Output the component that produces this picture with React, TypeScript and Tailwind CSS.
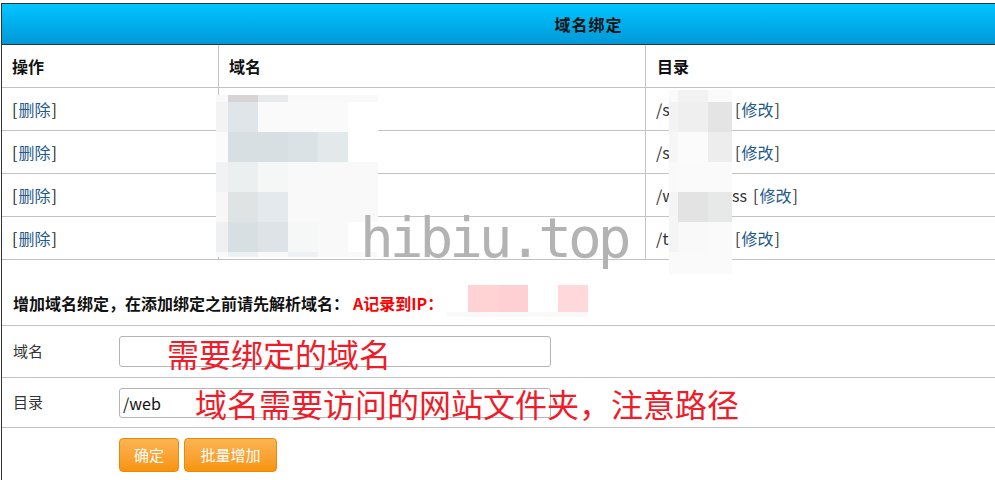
const cn = { fontFamily: '"Microsoft YaHei", "Noto Sans CJK SC", sans-serif' };

const rows = [
  { dir: "/s", tail: "" },
  { dir: "/s", tail: "" },
  { dir: "/w", tail: "ss" },
  { dir: "/t", tail: "" },
];

// pixelated mosaic over the domain column
const domainBlur = [
  ["bg-[#f9f9f9]", "bg-[#d6d4d3]", "bg-[#e6eaeb]", "bg-[#f9f9f9]", "bg-[#f9f9f9]", "bg-[#f9f9f9]"],
  ["bg-[#f3f3f3]", "bg-[#dfe5e8]", "bg-[#fafafa]", "bg-[#fafafa]", "bg-[#fafafa]", "bg-white"],
  ["bg-[#fbfbfb]", "bg-[#d7dfe2]", "bg-[#d7dfe2]", "bg-[#dae2e5]", "bg-[#e3e8ea]", "bg-white"],
  ["bg-[#f0f2f3]", "bg-[#ebeff0]", "bg-[#f5f7f7]", "bg-[#f9f9f9]", "bg-[#f9f9f9]", "bg-[#f9f9f9]"],
  ["bg-[#f7f7f7]", "bg-[#dfe3e3]", "bg-[#e3e9ec]", "bg-[#f9f9f9]", "bg-[#f9f9f9]", "bg-[#f9f9f9]"],
  ["bg-[#eef0f1]", "bg-[#d7dfe2]", "bg-[#dde3e6]", "bg-[#f6f8f8]", "bg-[#f9f9f9]", "bg-white"],
  ["bg-[#f9f9f9]", "bg-[#eef1f3]", "bg-[#f9f9f9]", "bg-[#eef1f3]", "bg-[#f9f9f9]", "bg-[#f9f9f9]"],
];

const dirBlur = [
  ["bg-[#fafafa]", "bg-[#f2f2f2]", "bg-[#fafafa]"],
  ["bg-[#f3f3f3]", "bg-[#efefef]", "bg-[#e4e4e4]"],
  ["bg-[#f6f6f6]", "bg-[#fbfbfb]", "bg-[#ededed]"],
  ["bg-[#f9f9f9]", "bg-[#fafafa]", "bg-[#fafafa]"],
  ["bg-[#f5f5f5]", "bg-[#e3e3e3]", "bg-[#e7e8e8]"],
  ["bg-[#f4f4f4]", "bg-[#f9f9f9]", "bg-[#fafafa]"],
  ["bg-[#fafafa]", "bg-[#fafafa]", "bg-[#fafafa]"],
];

const App = () => {
  return (
    <div className="relative w-[995px] h-[480px] overflow-hidden bg-white text-[#222]" style={cn}>
      <div className="pt-[3px] pl-[1px]">
        <div className="w-[1174px] border-l border-t border-[#333]">
          {/* title bar */}
          <div className="h-[41px] flex items-center justify-center bg-gradient-to-b from-[#00c6ff] to-[#0098d8] border-b border-[#333]">
            <span className="text-[16px] font-bold text-[#111] tracking-[1px]">域名绑定</span>
          </div>

          {/* header row */}
          <div className="flex h-[43px] border-b border-[#c3c3c3] text-[16px] font-semibold text-[#111]">
            <div className="w-[217px] border-r border-[#c3c3c3] pl-[10px] flex items-center">操作</div>
            <div className="w-[427px] border-r border-[#c3c3c3] pl-[10px] flex items-center">域名</div>
            <div className="flex-1 pl-[11px] flex items-center">目录</div>
          </div>

          {rows.map((r, i) => (
            <div key={i} className="flex h-[43px] border-b border-[#c3c3c3] text-[16px]">
              <div className="w-[217px] border-r border-[#c3c3c3] pl-[10px] flex items-center">
                <span className="text-[#222] pr-[1px]">[</span>
                <span className="text-[#1f5a8a]">删除</span>
                <span className="text-[#222] pl-[1px]">]</span>
              </div>
              <div className="w-[427px] border-r border-[#c3c3c3]"></div>
              <div className="flex-1 pl-[10px] flex items-center text-[#333]">
                <span className={r.tail ? "w-[97px] flex justify-between pr-[6px]" : "w-[79px]"}>
                  <span>{r.dir}</span>
                  {r.tail && <span>{r.tail}</span>}
                </span>
                <span>
                  <span className="pr-[1px]">[</span>
                  <span className="text-[#1f5a8a]">修改</span>
                  <span className="pl-[1px]">]</span>
                </span>
              </div>
            </div>
          ))}

          {/* add binding hint */}
          <div className="h-[66px] border-b border-[#c3c3c3] pl-[11px] flex items-end pb-[10px] text-[16px] font-bold text-[#111]">
            增加域名绑定，在添加绑定之前请先解析域名：
            <span className="text-[#f00] ml-[4px]">A记录到IP：</span>
          </div>

          {/* domain input */}
          <div className="h-[52px] border-b border-[#c3c3c3] flex items-center text-[15px]">
            <label className="w-[117px] pl-[11px] text-[#333]">域名</label>
            <div className="w-[432px] h-[31px] border border-[#b5b5b5] rounded-[3px] bg-white"></div>
          </div>

          {/* directory input */}
          <div className="h-[50px] border-b border-[#c3c3c3] flex items-center text-[15px]">
            <label className="w-[117px] pl-[11px] text-[#333]">目录</label>
            <div className="w-[432px] h-[30px] border border-[#b5b5b5] rounded-[3px] bg-white flex items-center pl-[3px] text-[16px] text-[#111]">
              /web
            </div>
          </div>

          {/* buttons */}
          <div className="h-[60px] flex items-start pt-[10px] pl-[117px] gap-[5px]">
            <button className="h-[34px] w-[60px] rounded-[4px] border border-[#e58a0c] bg-gradient-to-b from-[#fbb450] to-[#f89406] text-white text-[15px]">
              确定
            </button>
            <button className="h-[34px] w-[93px] rounded-[4px] border border-[#e58a0c] bg-gradient-to-b from-[#fbb450] to-[#f89406] text-white text-[15px]">
              批量增加
            </button>
          </div>
        </div>
      </div>

      {/* mosaic over domains */}
      <div className="absolute left-[216px] top-[95px] grid grid-cols-[12px_30px_30px_30px_30px_30px] grid-rows-[7px_30px_30px_30px_30px_30px_5px]">
        {domainBlur.flat().map((c, i) => (
          <div key={i} className={c}></div>
        ))}
      </div>

      {/* mosaic over directories */}
      <div className="absolute left-[669px] top-[90px] grid grid-cols-[9px_30px_24px] grid-rows-[12px_30px_30px_30px_30px_30px_22px]">
        {dirBlur.flat().map((c, i) => (
          <div key={i} className={c}></div>
        ))}
      </div>

      {/* mosaic over IP */}
      <div className="absolute left-[447px] top-[285px] flex flex-col">
        <div className="flex h-[27px]">
          <div className="w-[21px]"></div>
          <div className="w-[30px] bg-[#ffd2d3]"></div>
          <div className="w-[30px] bg-[#ffd0d3]"></div>
          <div className="w-[30px]"></div>
          <div className="w-[30px] bg-[#ffd8dc]"></div>
        </div>
        <div className="h-[5px] w-[141px] bg-[#f9f9f9]"></div>
      </div>

      {/* watermark */}
      <div
        className="absolute left-[360px] top-[210px] text-[56px] leading-none text-[#b3b3b3] tracking-[-4px]"
        style={{ fontFamily: '"DejaVu Sans Mono", monospace' }}
      >
        hibiu.top
      </div>

      {/* red notes */}
      <div className="absolute left-[167px] top-[337px] text-[32px] leading-none text-[#ef1c2a]">需要绑定的域名</div>
      <div className="absolute left-[195px] top-[387px] text-[32px] leading-none text-[#ef1c2a]">
        域名需要访问的网站文件夹，注意路径
      </div>
    </div>
  );
};

export default App;
